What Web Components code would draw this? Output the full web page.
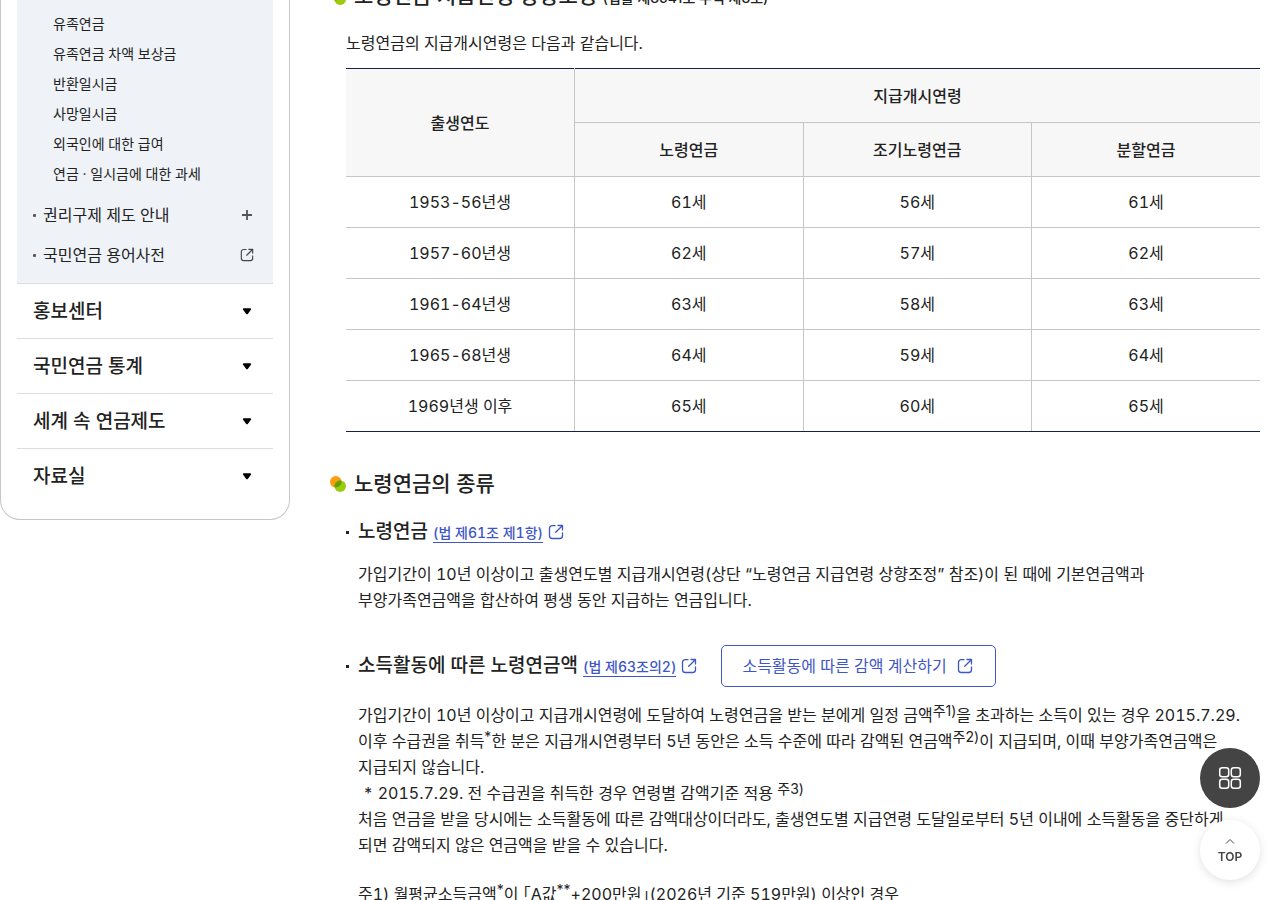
<!DOCTYPE html>
<html lang="ko">
<head>
<meta charset="utf-8">
<meta name="viewport" content="width=device-width, initial-scale=1">
<title>노령연금</title>
<style>
  html, body { margin: 0; }
  body {
    font: 400 16px/26px Inter, "Noto Sans CJK KR", sans-serif;
    font-variant-numeric: tabular-nums;
    color: #222;
    background: #fff;
    word-break: keep-all;
  }
  sup { font-size: 14px; line-height: 0; vertical-align: 5px; font-variant-numeric: normal; }
  .half { font-feature-settings: "halt"; }
  .note { padding-left: 5px; }
</style>
</head>
<body>
<pension-page>
  <side-nav slot="side">
    <side-sub>유족연금</side-sub>
    <side-sub>유족연금 차액 보상금</side-sub>
    <side-sub>반환일시금</side-sub>
    <side-sub>사망일시금</side-sub>
    <side-sub>외국인에 대한 급여</side-sub>
    <side-sub>연금 · 일시금에 대한 과세</side-sub>
    <side-item icon="plus">권리구제 제도 안내</side-item>
    <side-item icon="out">국민연금 용어사전</side-item>
    <side-group slot="groups">홍보센터</side-group>
    <side-group slot="groups">국민연금 통계</side-group>
    <side-group slot="groups">세계 속 연금제도</side-group>
    <side-group slot="groups">자료실</side-group>
  </side-nav>

  <content-section class="first">
    <span slot="title">노령연금 지급연령 상향조정</span>
    <span slot="note">(법률 제8541호 부칙 제8조)</span>
    <age-table>노령연금의 지급개시연령은 다음과 같습니다.</age-table>
  </content-section>

  <content-section>
    <span slot="title">노령연금의 종류</span>
    <pension-kind>
      <span slot="title">노령연금</span>
      <law-link slot="link">(법 제61조 제1항)</law-link>
      <text-block>가입기간이 10년 이상이고 출생연도별 지급개시연령(상단 “노령연금 지급연령 상향조정” 참조)이 된 때에 기본연금액과<br>부양가족연금액을 합산하여 평생 동안 지급하는 연금입니다.</text-block>
    </pension-kind>
    <pension-kind>
      <span slot="title">소득활동에 따른 노령연금액</span>
      <law-link slot="link">(법 제63조의2)</law-link>
      <calc-button slot="action">소득활동에 따른 감액 계산하기</calc-button>
      <text-block>가입기간이 10년 이상이고 지급개시연령에 도달하여 노령연금을 받는 분에게 일정 금액<sup>주1)</sup>을 초과하는 소득이 있는 경우 2015.7.29.<br>이후 수급권을 취득<sup>*</sup>한 분은 지급개시연령부터 5년 동안은 소득 수준에 따라 감액된 연금액<sup>주2)</sup>이 지급되며, 이때 부양가족연금액은<br>지급되지 않습니다.<br><span class="note">* 2015.7.29. 전 수급권을 취득한 경우 연령별 감액기준 적용 <sup>주3)</sup></span><br>처음 연금을 받을 당시에는 소득활동에 따른 감액대상이더라도, 출생연도별 지급연령 도달일로부터 5년 이내에 소득활동을 중단하게<br>되면 감액되지 않은 연금액을 받을 수 있습니다.</text-block>
      <text-block>주1) 월평균소득금액<sup>*</sup>이 <span class="half">「</span>A값<sup>**</sup>+200만원<span class="half">」</span>(2026년 기준 519만원) 이상인 경우</text-block>
    </pension-kind>
  </content-section>

  <quick-buttons slot="quick"></quick-buttons>
</pension-page>

<script>
const define = (name, html, setup) => {
  const template = document.createElement('template');
  template.innerHTML = html;
  customElements.define(name, class extends HTMLElement {
    constructor() {
      super();
      this.attachShadow({ mode: 'open' }).append(template.content.cloneNode(true));
    }
    connectedCallback() { if (setup) setup(this, this.shadowRoot); }
  });
};

const outIcon = `<svg viewBox="0 0 16 16" width="16" height="16" fill="none" stroke="currentColor" stroke-width="1.3" stroke-linecap="round" stroke-linejoin="round" aria-hidden="true"><path d="M7 1.7H4.2A2.7 2.7 0 0 0 1.5 4.4v7.4a2.7 2.7 0 0 0 2.7 2.7h7.6a2.7 2.7 0 0 0 2.7-2.7V9M10 1.5h4.5V6M14.3 1.7 7.7 8.3"/></svg>`;

define('pension-page', `
  <style>
    :host { display: block; height: 100vh; overflow: hidden; }
    .cols { display: grid; grid-template-columns: 290px minmax(0, 1fr); gap: 40px; align-items: start; padding-right: 20px; }
  </style>
  <div class="cols"><slot name="side"></slot><main><slot></slot></main></div>
  <slot name="quick"></slot>`);

define('side-nav', `
  <style>
    :host { display: block; box-sizing: border-box; padding: 0 16px 16px; border: 1px solid #c6c6c6; border-top: 0; border-radius: 0 0 20px 20px; }
    .open { background: #eff3f8; padding: 9px 16px 8px; }
  </style>
  <nav><div class="open"><slot></slot></div><slot name="groups"></slot></nav>`);

define('side-sub', `
  <style>
    :host { display: block; font-size: 14px; line-height: 30px; padding-left: 20px; }
    :host(:nth-child(6)) { margin-bottom: 6px; }
    a { color: #222; text-decoration: none; }
  </style>
  <a href="#"><slot></slot></a>`);

define('side-item', `
  <style>
    :host { display: block; line-height: 40px; }
    a { display: flex; align-items: center; color: #222; text-decoration: none; }
    .dot { width: 3px; height: 3px; border-radius: 1px; background: #555; margin-right: 7px; }
    .icon { display: flex; margin-left: auto; color: #444; padding-right: 3px; }
    .icon svg { width: 14px; height: 14px; }
    .icon .plus { width: 12px; height: 12px; margin: 0 1px; color: #555; }
  </style>
  <a href="#"><span class="dot"></span><slot></slot><span class="icon"></span></a>`,
  (host, root) => {
    root.querySelector('.icon').innerHTML = host.getAttribute('icon') === 'plus'
      ? `<svg class="plus" viewBox="0 0 12 12" fill="none" stroke="currentColor" stroke-width="1.8" aria-hidden="true"><path d="M6 1v10M1 6h10"/></svg>`
      : outIcon;
  });

define('side-group', `
  <style>
    :host { display: block; border-top: 1px solid #ddd; }
    button { display: flex; align-items: center; justify-content: space-between; width: 100%; padding: 2px 21px 0 16px; border: 0; background: none; font: inherit; font-size: 19px; font-weight: 500; line-height: 52px; color: #222; cursor: pointer; }
  </style>
  <button type="button"><slot></slot><svg width="10" height="8" viewBox="0 0 10 8" aria-hidden="true"><path d="M1.800 .3h6.400c.9 0 1.200.9.7 1.500L5.800 5.900c-.4.5-1.200.5-1.600 0L1.100 1.800C.6 1.200.9.3 1.800.3z"/></svg></button>`);

define('content-section', `
  <style>
    :host { display: block; margin-bottom: 34px; }
    :host(.first) { margin-top: -22px; }
    h2 { display: flex; align-items: center; gap: 8px; margin: 0; font-size: 21px; font-weight: 500; line-height: 36px; }
    svg { flex: none; }
    ::slotted([slot="note"]) { font-size: 14px; font-variant-numeric: normal; }
    .body { padding-left: 16px; }
  </style>
  <section>
    <h2><svg width="16" height="16" viewBox="0 0 16 16" aria-hidden="true"><circle cx="5.800" cy="5.800" r="5.800" fill="#ff9b0e"/><circle cx="10.200" cy="10.200" r="5.800" fill="#9bcb0c"/><path d="M4.640 11.360A5.800 5.800 0 0 1 11.360 4.640 5.800 5.800 0 0 1 4.640 11.360z" fill="#5fa000"/></svg><span><slot name="title"></slot> <slot name="note"></slot></span></h2>
    <div class="body"><slot></slot></div>
  </section>`);

define('age-table', `
  <style>
    :host { display: block; padding-top: 14px; }
    p { margin: 0 0 12px; }
    table { width: 100%; table-layout: fixed; border-collapse: collapse; text-align: center; }
    th, td { border-right: 1px solid #c6c6c6; border-bottom: 1px solid #c6c6c6; padding: 12px 0; font-weight: 400; }
    thead th { background: #f7f7f7; font-weight: 500; padding: 14px 0 13px; }
    thead tr:first-child th { border-top: 1px solid #16204d; }
    tr > :last-child { border-right: 0; }
    tbody tr:last-child > * { border-bottom-color: #16204d; }
  </style>
  <p id="about"><slot></slot></p>
  <table aria-labelledby="about">
    <thead>
      <tr><th scope="col" rowspan="2">출생연도</th><th scope="colgroup" colspan="3">지급개시연령</th></tr>
      <tr><th scope="col">노령연금</th><th scope="col">조기노령연금</th><th scope="col">분할연금</th></tr>
    </thead>
    <tbody></tbody>
  </table>`,
  (host, root) => {
    root.querySelector('tbody').innerHTML = [
      ['1953-56년생', 61, 56, 61], ['1957-60년생', 62, 57, 62], ['1961-64년생', 63, 58, 63],
      ['1965-68년생', 64, 59, 64], ['1969년생 이후', 65, 60, 65]
    ].map(([year, ...ages]) => `<tr><th scope="row">${year}</th>${ages.map(a => `<td>${a}세</td>`).join('')}</tr>`).join('');
  });

define('pension-kind', `
  <style>
    :host { display: block; padding-top: 8px; margin-bottom: 16px; }
    .head { display: flex; align-items: center; min-height: 44px; margin-bottom: 7px; }
    .dot { width: 3px; height: 3px; background: #222; margin-right: 9px; }
    h3 { margin: 0 5px 0 0; font-size: 19px; font-weight: 500; line-height: 30px; }
    ::slotted([slot="action"]) { margin: 8px 0 8px 24px; }
    .body { padding-left: 12px; }
  </style>
  <div class="head"><span class="dot"></span><h3><slot name="title"></slot></h3><slot name="link"></slot><slot name="action"></slot></div>
  <div class="body"><slot></slot></div>`);

define('law-link', `
  <style>
    :host { display: block; }
    a { display: flex; align-items: center; gap: 5px; color: #3f57c5; text-decoration: none; font-size: 14px; font-weight: 500; line-height: 18px; }
    span { padding-top: 2px; border-bottom: 1px solid; }
  </style>
  <a href="#"><span><slot></slot></span>${outIcon}</a>`);

define('calc-button', `
  <style>
    :host { display: block; }
    button { display: flex; align-items: center; gap: 10px; padding: 7px 22px 7px 20px; border: 1px solid #3f57c5; border-radius: 5px; background: #fff; color: #3f57c5; font: inherit; cursor: pointer; }
  </style>
  <button type="button"><slot></slot>${outIcon}</button>`);

define('text-block', `
  <style>
    :host { display: block; margin-bottom: 23px; }
    :host(:last-child) { margin-bottom: 0; }
  </style>
  <slot></slot>`);

define('quick-buttons', `
  <style>
    :host { display: flex; flex-direction: column; gap: 12px; position: fixed; right: 20px; bottom: 20px; }
    button { display: flex; flex-direction: column; align-items: center; justify-content: center; gap: 4px; width: 60px; height: 60px; padding: 0; border: 0; border-radius: 50%; font: inherit; cursor: pointer; }
    .menu { background: #444; color: #fff; }
    .top { padding-top: 2px; background: #fff; color: #444; font-size: 12px; font-weight: 600; line-height: 16px; box-shadow: 0 2px 10px rgba(0, 0, 0, .12); }
  </style>
  <button class="menu" type="button" aria-label="메뉴"><svg width="24" height="24" viewBox="0 0 24 24" fill="none" stroke="currentColor" stroke-width="1.5" aria-hidden="true"><rect x="1.700" y="1.700" width="9" height="9" rx="2.500"/><rect x="13.300" y="1.700" width="9" height="9" rx="2.500"/><rect x="1.700" y="13.300" width="9" height="9" rx="2.500"/><rect x="13.300" y="13.300" width="9" height="9" rx="2.500"/></svg></button>
  <button class="top" type="button"><svg width="12" height="8" viewBox="0 0 12 8" fill="none" stroke="currentColor" aria-hidden="true"><path d="M2 6.500l4-4 4 4"/></svg>TOP</button>`);
</script>
</body>
</html>
